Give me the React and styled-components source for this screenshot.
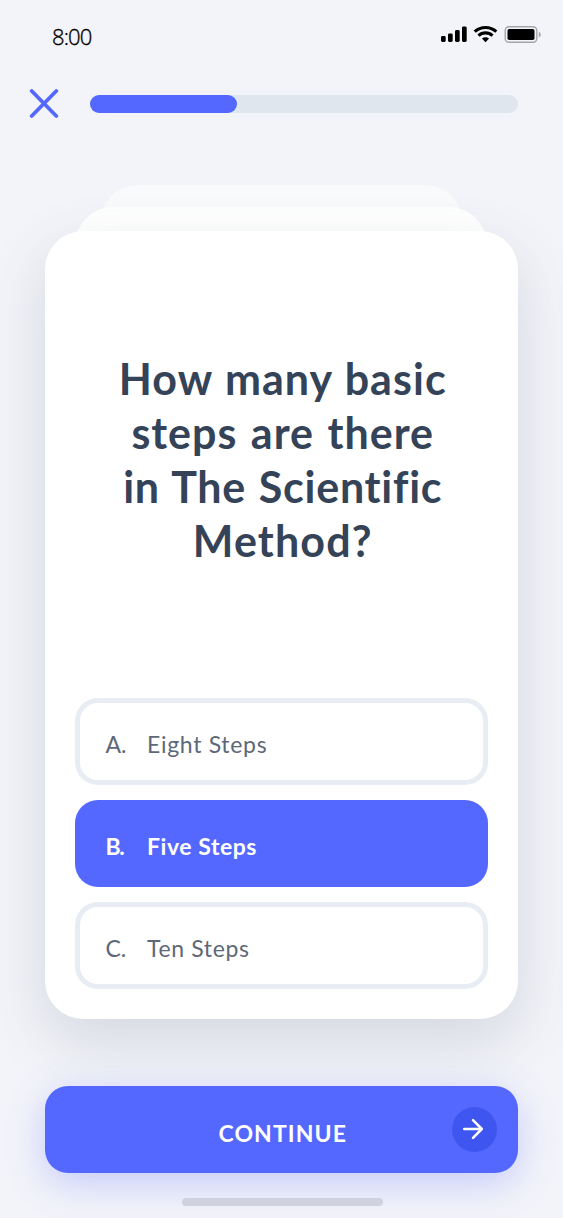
import React from "react";
import styled, { createGlobalStyle } from "styled-components";

const Global = createGlobalStyle`
  * { box-sizing: border-box; }
  body { margin: 0; background: #f3f4f9; font-family: Lato, "Liberation Sans", sans-serif; }
  button { font-family: inherit; border: 0; padding: 0; margin: 0; background: none; cursor: pointer; }
`;

const Screen = styled.main`
  width: 563px;
  height: 1218px;
  background: #f3f4f9;
  display: flex;
  flex-direction: column;
  overflow: hidden;
`;

const StatusBar = styled.header`
  height: 74px;
  padding: 0 21px 0 52px;
  display: flex;
  justify-content: space-between;
  align-items: center;
`;

const Time = styled.span`
  font: 300 22px/30px "Open Sans", sans-serif;
  letter-spacing: -0.9px;
  color: #000;
  -webkit-text-stroke: 0.35px #000;
  margin-top: -2px;
`;

const StatusIcons = styled.svg`
  display: block;
  width: 102px;
  height: 20px;
  margin-top: -6px;
`;

const TopBar = styled.div`
  height: 59px;
  padding: 0 45.5px 0 29px;
  display: flex;
  align-items: center;
  gap: 31px;
`;

const CloseButton = styled.button`
  width: 30px;
  height: 30px;
  svg { display: block; }
`;

const Track = styled.div`
  flex: 1;
  height: 18px;
  border-radius: 9px;
  background: #dfe6ee;
`;

const Progress = styled.div`
  width: ${(p) => p.$width};
  height: 100%;
  border-radius: 9px;
  background: #5468ff;
`;

const Deck = styled.section`
  margin-top: 51.6px;
  display: flex;
  flex-direction: column;
  align-items: center;
  padding-right: 0.5px;
`;

const BackCard = styled.div`
  width: ${(p) => p.$width}px;
  height: 80px;
  margin-bottom: ${(p) => p.$pull}px;
  border-radius: 38px 38px 0 0;
  background: ${(p) => p.$fill};
`;

const Card = styled.article`
  width: 472.5px;
  height: 787.5px;
  padding: 0 30px 30px;
  border-radius: 38px;
  background: #fff;
  box-shadow: 0 22px 60px rgba(62, 76, 100, 0.17);
  display: flex;
  flex-direction: column;
`;

const Question = styled.h1`
  flex: 1;
  margin: 0;
  padding: 121px 0 0 3px;
  display: flex;
  flex-direction: column;
  align-items: center;
  font-size: 43px;
  line-height: 54px;
  font-weight: 700;
  color: #344357;
`;

const Line = styled.span`
  white-space: nowrap;
  letter-spacing: ${(p) => p.$spacing}px;
  word-spacing: ${(p) => p.$gap}px;
`;

const Answers = styled.div`
  display: flex;
  flex-direction: column;
  gap: 15px;
`;

const Answer = styled.button`
  height: 87px;
  padding: 6px 0 0 ${(p) => (p.$selected ? 30.5 : 25.5)}px;
  border: ${(p) => (p.$selected ? "0" : "5px solid #e8edf4")};
  border-radius: 23px;
  background: ${(p) => (p.$selected ? "#5468ff" : "#fff")};
  color: ${(p) => (p.$selected ? "#fff" : "#5d6878")};
  font-size: 23px;
  font-weight: ${(p) => (p.$selected ? 700 : 400)};
  letter-spacing: ${(p) => p.$spacing}px;
  display: flex;
  align-items: center;
`;

const Letter = styled.span`
  width: 41.5px;
  text-align: left;
  letter-spacing: ${(p) => (p.$tight ? -1.4 : 0)}px;
`;

const Footer = styled.footer`
  padding: 67.4px 45.5px 0 45px;
  display: flex;
  flex-direction: column;
  align-items: center;
`;

const ContinueButton = styled.button`
  width: 100%;
  height: 87px;
  padding: 0 21px;
  border-radius: 23px;
  background: #5468ff;
  box-shadow: 0 10px 38px rgba(84, 104, 255, 0.29);
  display: grid;
  grid-template-columns: 45px 1fr 45px;
  align-items: center;
  color: #fff;
  font-size: 23px;
  font-weight: 700;
`;

const ContinueLabel = styled.span`
  grid-column: 2;
  padding: 7px 0 0 3px;
  letter-spacing: 1.1px;
`;

const ArrowBadge = styled.span`
  width: 45px;
  height: 45px;
  border-radius: 50%;
  background: #3e56ef;
  display: grid;
  place-items: center;
  padding: 0 2px 1px 0;
`;

const HomeIndicator = styled.div`
  width: 201px;
  height: 8px;
  margin: 25px 0 0 2px;
  border-radius: 4px;
  background: #d0d2df;
`;

const lines = [
  ["How many basic", 1.05, 1],
  ["steps are there", 1, 2],
  ["in The Scientific", 0.75, 1.5],
  ["Method?", 1.15, 0],
];

const answers = [
  { letter: "A.", text: "Eight Steps", spacing: 0.7 },
  { letter: "B.", text: "Five Steps", spacing: 0.55, selected: true },
  { letter: "C.", text: "Ten Steps", spacing: 0.65 },
];

export default function App() {
  return (
    <Screen>
      <Global />
      <StatusBar>
        <Time>8:00</Time>
        <StatusIcons viewBox="0 0 102 20">
          <rect x="1" y="12" width="4.7" height="6" rx="1.4" />
          <rect x="8" y="9.5" width="4.7" height="8.5" rx="1.4" />
          <rect x="15" y="6" width="4.7" height="12" rx="1.4" />
          <rect x="22" y="2.5" width="4.7" height="15.5" rx="1.4" />
          <g fill="none" stroke="#000" strokeWidth="3.1">
            <path d="M34.7 7.7c6-5.6 15.6-5.6 21.6 0" />
            <path d="M38.5 11.6c3.9-3.6 10.1-3.6 14 0" />
          </g>
          <path d="M42 14.6c2-1.7 5-1.7 7 0L45.5 18.3z" />
          <rect x="65.2" y="2.7" width="31.6" height="15.6" rx="3.8" fill="none" stroke="#a4a5a9" strokeWidth="1.4" />
          <rect x="67.5" y="5" width="27" height="11" rx="1.8" />
          <path d="M98.8 7.7c2.6.9 2.6 4.7 0 5.6z" fill="#a4a5a9" />
        </StatusIcons>
      </StatusBar>
      <TopBar>
        <CloseButton aria-label="Close">
          <svg width="30" height="30" viewBox="0 0 30 30" fill="none" stroke="#5468ff" strokeWidth="3.8" strokeLinecap="round">
            <path d="M2.7 2l24.6 25M27.3 2L2.7 27" />
          </svg>
        </CloseButton>
        <Track>
          <Progress $width="34.5%" />
        </Track>
      </TopBar>
      <Deck>
        <BackCard $width={363} $pull={-57.5} $fill="#f9fafc" />
        <BackCard $width={412} $pull={-56} $fill="#ffffff" />
        <Card>
          <Question>
            {lines.map(([text, spacing, gap]) => (
              <Line key={text} $spacing={spacing} $gap={gap}>{text}</Line>
            ))}
          </Question>
          <Answers>
            {answers.map((a) => (
              <Answer key={a.letter} $selected={a.selected} $spacing={a.spacing}>
                <Letter $tight={a.selected}>{a.letter}</Letter>
                <span>{a.text}</span>
              </Answer>
            ))}
          </Answers>
        </Card>
      </Deck>
      <Footer>
        <ContinueButton>
          <ContinueLabel>CONTINUE</ContinueLabel>
          <ArrowBadge>
            <svg width="22" height="22" viewBox="0 0 22 22" fill="none" stroke="#fff" strokeWidth="2.5" strokeLinecap="round" strokeLinejoin="round">
              <path d="M2.2 11h17.6M11 2.2l8.8 8.8-8.8 8.8" />
            </svg>
          </ArrowBadge>
        </ContinueButton>
        <HomeIndicator />
      </Footer>
    </Screen>
  );
}
